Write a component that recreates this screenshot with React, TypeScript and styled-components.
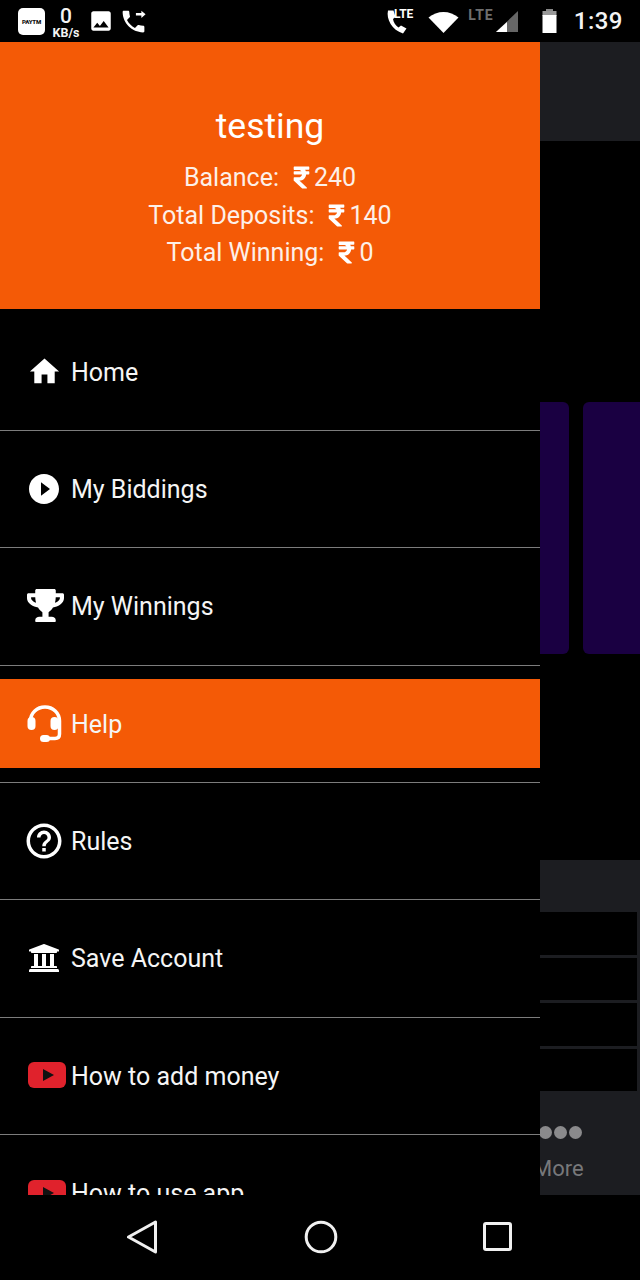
import React from "react";
import styled, { createGlobalStyle } from "styled-components";
import { FaRupeeSign, FaTrophy, FaUniversity } from "react-icons/fa";
import { MdHome, MdPlayCircleFilled, MdHelpOutline, MdImage } from "react-icons/md";

const Global = createGlobalStyle`
  html, body { margin: 0; padding: 0; background: #000; }
  #root { width: 640px; height: 1280px; }
  * { box-sizing: border-box; }
`;

const Phone = styled.div`
  width: 640px; height: 1280px; background: #000; color: #fff;
  font-family: Roboto, "Liberation Sans", sans-serif;
  display: flex; flex-direction: column; overflow: hidden;
`;

const StatusBar = styled.div`
  height: 42px; flex: none; display: flex; align-items: center; justify-content: space-between;
  padding: 0 17px 0 18px;
`;
const StatusGroup = styled.div`display: flex; align-items: center;`;
const PaytmBadge = styled.div`
  width: 27px; height: 27px; border-radius: 5px; background: #fff; color: #111;
  font-size: 6px; font-weight: 900; display: flex; align-items: center; justify-content: center;
  letter-spacing: -0.2px;
`;
const Speed = styled.div`
  width: 30px; margin-left: 6px; display: flex; flex-direction: column; align-items: center;
  font-weight: 700; margin-top: 2px; color: #f4f4f4;
`;
const SpeedValue = styled.span`font-size: 21px; line-height: 20px; font-weight: 500;`;
const SpeedUnit = styled.span`font-size: 12.5px; line-height: 13px;`;
const ImageGlyph = styled(MdImage)`margin-left: 7px;`;
const CallGlyph = styled.svg`margin-left: 5px;`;
const Clock = styled.span`font-size: 24px; font-weight: 500; letter-spacing: 0.5px; margin-left: 17px; color: #f4f4f4;`;

const Body = styled.div`flex: 1; min-height: 0; position: relative; overflow: hidden;`;

const Backdrop = styled.div`display: flex; flex-direction: column; height: 100%;`;
const AppBar = styled.div`height: 99px; flex: none; background: #1c1d21;`;
const Cards = styled.div`
  display: flex; gap: 14px; flex: none; height: 252px; margin: 261px 0 206px 0;
  justify-content: flex-end; margin-right: -60px;
`;
const PromoCard = styled.div<{ $w: number }>`
  height: 100%; border-radius: 6px; background: #1a0042; width: ${p => p.$w}px; flex: none;
`;
const Section = styled.div`
  flex: 1; background: #1c1d21; display: flex; flex-direction: column; padding-top: 52px;
`;
const Rows = styled.div`
  height: 179px; margin-right: 3px; display: flex; flex-direction: column; gap: 3px; flex: none;
`;
const TableRow = styled.div`flex: 1; background: #000;`;
const Dots = styled.div`display: flex; gap: 2px; margin: 35px 0 0 539px;`;
const Dot = styled.span`width: 13px; height: 13px; border-radius: 50%; background: #8a8a8c;`;
const MoreLabel = styled.div`font-size: 22px; color: #77787a; margin: 18px 0 0 533px; line-height: 24px;`;

const Drawer = styled.aside`
  position: absolute; left: 0; top: 0; bottom: 0; width: 540px; background: #000;
  display: flex; flex-direction: column; overflow: hidden;
`;
const Header = styled.header`
  height: 267px; flex: none; background: #f45a06; display: flex; flex-direction: column;
  align-items: center; padding-top: 61px;
`;
const Name = styled.div`font-size: 35.5px; line-height: 46px; margin-bottom: 10px;`;
const Stat = styled.div`
  font-size: 25px; line-height: 37.5px; display: flex; align-items: center; color: #fdf0e8;
`;
const StatLabel = styled.span`margin-right: 14px;`;
const Rupee = styled(FaRupeeSign)`color: #fff; width: 17px; height: 25px; margin-right: 4px;`;

const List = styled.nav`padding-top: 4.67px; flex: none;`;
const Item = styled.div`
  height: 117.33px; border-bottom: 1px solid #7c7c7c; display: flex; align-items: center; padding-bottom: 1px;
`;
const ItemInner = styled.div<{ $active?: boolean }>`
  width: 100%; height: 89px; display: flex; align-items: center; padding-left: 23px; gap: 6px;
  background: ${p => (p.$active ? "#f45a06" : "transparent")};
`;
const IconSlot = styled.span`width: 42px; flex: none; display: flex; justify-content: center; align-items: center;`;
const ItemLabel = styled.span`font-size: 25px; color: #f5f5f5; position: relative; top: 1px;`;
const TrophyIcon = styled(FaTrophy)`margin-left: 3px;`;
const HeadsetSvg = styled.svg`margin-left: 2px;`;
const YouTubeSvg = styled.svg`margin-left: 6px; flex: none;`;

const NavBar = styled.div`
  height: 85px; flex: none; background: #000; display: flex; align-items: center;
  padding: 0 128px 2px 126px; justify-content: space-between;
`;

const Headset = () => (
  <HeadsetSvg width="38" height="38" viewBox="0 0 38 38" fill="none">
    <path d="M4.500 21 V17 C4.500 9 11 3 19 3 C27 3 33.500 9 33.500 17 V30 C33.500 33 31.500 34.500 29 34.500 H21" stroke="#fff" strokeWidth="3.500" />
    <rect x="1.500" y="13" width="8" height="13" rx="4" fill="#fff" />
    <rect x="24.500" y="13" width="8" height="13" rx="4" fill="#fff" />
    <rect x="14" y="31" width="10" height="7" rx="3.500" fill="#fff" />
  </HeadsetSvg>
);

const YouTube = () => (
  <YouTubeSvg width="38" height="26" viewBox="0 0 38 26">
    <rect x="0" y="0" width="38" height="26" rx="6" fill="#e0222c" />
    <path d="M15 7 L26 13 L15 19 Z" fill="#111" />
  </YouTubeSvg>
);

const LteCall = () => (
  <svg width="34" height="28" viewBox="0 0 34 28" fill="#fff" style={{ marginRight: 9 }}>
    <path d="M3 3.500 C1 12 7 23 18 26.500 L21.500 21.500 L16 18.500 L13.500 20.500 C10.500 18.500 8.500 15.500 8 12 L10.500 10 L8.500 3.500 Z" />
    <text x="9" y="11" fontSize="12" fontWeight="700" fontFamily="Roboto, sans-serif">LTE</text>
  </svg>
);
const Wifi = () => (
  <svg width="31" height="23" viewBox="0 0 31 23"><path d="M0.500 7.500 C9 0 22 0 30.500 7.500 L15.500 23 Z" fill="#fff" /></svg>
);
const LteText = styled.span`font-size: 14px; font-weight: 700; color: #6e6e6e; letter-spacing: 1px; margin: -12px 0 0 9px;`;
const Signal = () => (
  <svg width="24" height="23" viewBox="0 0 24 23" style={{ marginLeft: 1 }}>
    <path d="M23 1 V22 H1 Z" fill="#666" />
    <path d="M12 12 V22 H1 Z" fill="#fff" />
  </svg>
);
const Battery = () => (
  <svg width="15" height="24" viewBox="0 0 15 24" style={{ marginLeft: 23 }}>
    <rect x="4" y="0" width="7" height="3" fill="#888" />
    <rect x="0.500" y="2" width="14" height="5" fill="#999" />
    <rect x="0.500" y="6" width="14" height="18" fill="#fff" />
  </svg>
);

const menu: { label: string; icon: React.ReactNode; active?: boolean }[] = [
  { label: "Home", icon: <MdHome size={35} color="#fff" /> },
  { label: "My Biddings", icon: <MdPlayCircleFilled size={36} color="#fff" /> },
  { label: "My Winnings", icon: <TrophyIcon size={37} color="#fff" /> },
  { label: "Help", icon: <Headset />, active: true },
  { label: "Rules", icon: <MdHelpOutline size={42} color="#fff" /> },
  { label: "Save Account", icon: <FaUniversity size={32} color="#fff" /> },
  { label: "How to add money", icon: <YouTube /> },
  { label: "How to use app", icon: <YouTube /> },
];

const stats = [
  ["Balance:", "240"],
  ["Total Deposits:", "140"],
  ["Total Winning:", "0"],
];

export default function App() {
  return (
    <Phone>
      <Global />
      <StatusBar>
        <StatusGroup>
          <PaytmBadge>PAYTM</PaytmBadge>
          <Speed>
            <SpeedValue>0</SpeedValue>
            <SpeedUnit>KB/s</SpeedUnit>
          </Speed>
          <ImageGlyph size={26} color="#fff" />
          <CallGlyph width="29" height="29" viewBox="0 0 24 24" fill="#fff">
            <path d="M20 15.500c-1.250 0-2.450-.2-3.570-.57-.35-.11-.74-.03-1.020.24l-2.200 2.200c-2.830-1.440-5.150-3.750-6.590-6.590l2.200-2.210c.28-.26.36-.65.25-1C8.700 6.450 8.500 5.250 8.500 4c0-.55-.45-1-1-1H4c-.55 0-1 .45-1 1 0 9.390 7.610 17 17 17 .55 0 1-.45 1-1v-3.500c0-.55-.45-1-1-1z" />
            <path d="M14 5h4.500V3L22 6l-3.500 3V7H14z" />
          </CallGlyph>
        </StatusGroup>
        <StatusGroup>
          <LteCall />
          <Wifi />
          <LteText>LTE</LteText>
          <Signal />
          <Battery />
          <Clock>1:39</Clock>
        </StatusGroup>
      </StatusBar>

      <Body>
        <Backdrop>
          <AppBar />
          <Cards>
            <PromoCard $w={60} />
            <PromoCard $w={117} />
          </Cards>
          <Section>
            <Rows>
              <TableRow />
              <TableRow />
              <TableRow />
              <TableRow />
            </Rows>
            <Dots>
              <Dot />
              <Dot />
              <Dot />
            </Dots>
            <MoreLabel>More</MoreLabel>
          </Section>
        </Backdrop>

        <Drawer>
          <Header>
            <Name>testing</Name>
            {stats.map(([label, value]) => (
              <Stat key={label}>
                <StatLabel>{label}</StatLabel>
                <Rupee />
                {value}
              </Stat>
            ))}
          </Header>
          <List>
            {menu.map(m => (
              <Item key={m.label}>
                <ItemInner $active={m.active}>
                  <IconSlot>{m.icon}</IconSlot>
                  <ItemLabel>{m.label}</ItemLabel>
                </ItemInner>
              </Item>
            ))}
          </List>
        </Drawer>
      </Body>

      <NavBar>
        <svg width="32" height="34" viewBox="0 0 32 34" fill="none">
          <path d="M29.500 2 V32 L2.500 17 Z" stroke="#f0f0f0" strokeWidth="3" strokeLinejoin="round" />
        </svg>
        <svg width="34" height="34" viewBox="0 0 34 34" fill="none">
          <circle cx="17" cy="17" r="14.800" stroke="#f0f0f0" strokeWidth="3" />
        </svg>
        <svg width="29" height="29" viewBox="0 0 29 29" fill="none">
          <rect x="1.500" y="1.500" width="26" height="26" rx="1.500" stroke="#f0f0f0" strokeWidth="3" />
        </svg>
      </NavBar>
    </Phone>
  );
}
